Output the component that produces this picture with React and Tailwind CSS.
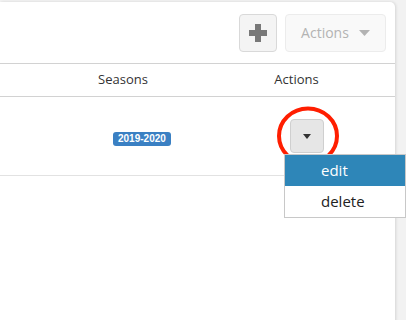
export default function App() {
  return (
    <div className="h-[320px] w-[406px] overflow-hidden bg-[#f2f2f2] pt-[2px] pr-[11px] font-['Open_Sans',sans-serif] text-[#333]">
      <div className="relative h-[330px] rounded-tr-[5px] bg-white shadow-[1px_0_3px_rgba(0,0,0,0.12)]">
        <div className="flex h-[62px] items-center justify-end gap-[8px] border-b border-[#d2d2d2] pr-[9px]">
          <button className="flex h-[38px] w-[38px] items-center justify-center rounded-[4px] border border-[#d9d9d9] bg-[#f4f4f4]">
            <svg width="20" height="20" viewBox="0 0 20 20">
              <path d="M7 1h6v6h6v6h-6v6H7v-6H1V7h6z" fill="#787878" />
            </svg>
          </button>
          <button className="flex h-[38px] w-[101px] items-center justify-center gap-[10px] rounded-[4px] border border-[#ececec] bg-[#f9f9f9] text-[14px] text-[#b3b3b3]">
            Actions
            <svg width="11" height="6" viewBox="0 0 11 6">
              <path d="M0 0h11L5.5 6z" fill="#b3b3b3" />
            </svg>
          </button>
        </div>
        <div className="grid h-[33px] grid-cols-[48px_150px_1fr] items-center border-b border-[#d2d2d2] text-[13px]">
          <div />
          <div className="text-center">Seasons</div>
          <div className="text-center">Actions</div>
        </div>
        <div className="grid h-[79px] grid-cols-[48px_150px_1fr] items-center border-b border-[#e2e2e2]">
          <div />
          <div className="pl-[65px]">
            <span className="inline-block rounded-[3px] bg-[#3a80c3] px-[5px] font-['Liberation_Sans',sans-serif] text-[10px] leading-[14px] font-bold text-white">
              2019-2020
            </span>
          </div>
          <div className="pl-[92px]">
            <button className="flex h-[34px] w-[34px] items-center justify-center rounded-[4px] border border-[#cfcfcf] bg-[#e6e6e6]">
              <svg width="8" height="5" viewBox="0 0 8 5">
                <path d="M0 0h8L4 5z" fill="#333" />
              </svg>
            </button>
          </div>
        </div>
        <svg className="absolute left-[277px] top-[103px]" width="64" height="62" viewBox="0 0 64 62">
          <ellipse cx="31" cy="31" rx="29" ry="27.5" fill="none" stroke="#ff1e00" strokeWidth="4" />
        </svg>
        <div className="absolute left-[284px] top-[152px] w-[122px] border border-[#c8c8c8] bg-white text-[15px]">
          <div className="h-[31px] bg-[#2e86b8] pl-[36px] leading-[31px] text-white">edit</div>
          <div className="h-[31px] pl-[36px] leading-[31px] text-[#222]">delete</div>
        </div>
      </div>
    </div>
  );
}
